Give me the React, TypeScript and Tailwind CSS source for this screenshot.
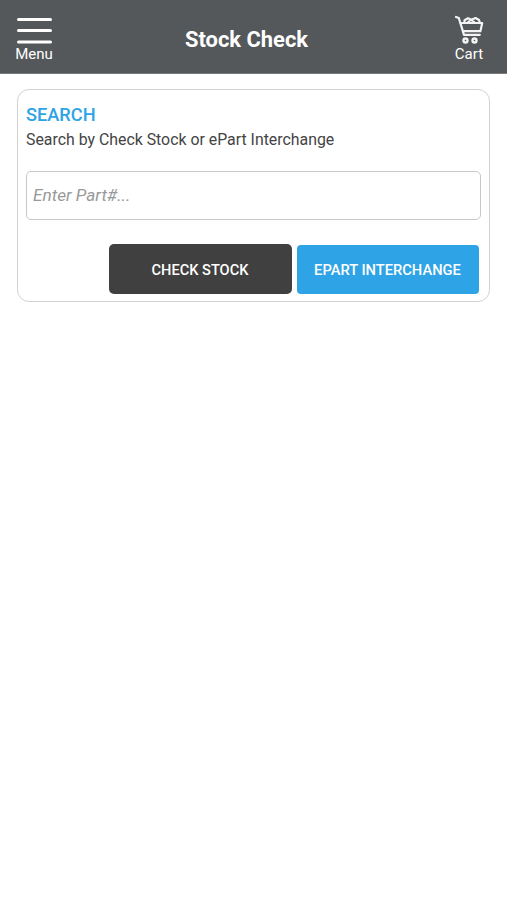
function CartIcon() {
  return (
    <svg width="30" height="30" viewBox="0 0 30 30" fill="none" stroke="#f4f4f4" strokeWidth="2.200" strokeLinecap="round" strokeLinejoin="round">
      <path d="M2 2l2.800 1L10 19.800h15.800" />
      <path d="M6.500 8h21.700l-1.800 8.200H9.200" />
      <path d="M10.500 7.500V5.300l3.500-2 3.500 1.500 4-1.800 3.500 2 .8 2.500" />
      <path d="M14 6.800l3-1.600 3.500 1.800" strokeWidth="1.600" />
      <circle cx="11.500" cy="25.500" r="2" strokeWidth="2.400" />
      <circle cx="20.500" cy="25.500" r="2" strokeWidth="2.400" />
    </svg>
  )
}

function MenuIcon() {
  return (
    <svg width="36" height="30" viewBox="0 0 36 30" stroke="#fff" strokeWidth="3" strokeLinecap="round">
      <path d="M2.500 4.500h32M2.500 15.500h32M2.500 27h32" />
    </svg>
  )
}

export default function App() {
  return (
    <div className="min-h-screen bg-white font-['Roboto',sans-serif] text-[#444]">
      <header className="grid h-[74px] grid-cols-[38px_1fr_38px] items-start border-b border-[#777b7d] bg-[#54585a] pt-[15px] pr-[19px] pl-[15px] text-white">
        <button className="flex flex-col items-center text-[15px] leading-[18px]">
          <MenuIcon />
          Menu
        </button>
        <h1 className="pt-[9px] pr-[10px] text-center text-[21.900px] leading-8 font-bold">Stock Check</h1>
        <button className="flex flex-col items-center text-[15px] leading-[18px]">
          <CartIcon />
          Cart
        </button>
      </header>

      <main className="mx-[17px] mt-[15px] h-[213px] rounded-[12px] border-[1.500px] border-[#d2d2d2] px-2 pt-[13px]">
        <h2 className="text-[18.200px] leading-[23px] font-medium text-[#2ea3e6]">SEARCH</h2>
        <p className="pt-[2px] text-[15.870px] leading-6">Search by Check Stock or ePart Interchange</p>
        <input
          className="mt-[19px] block h-[49px] w-full rounded-[5px] border border-[#c8c8c8] px-[6px] pb-[2px] text-[17.200px] italic placeholder:text-[#999]"
          placeholder="Enter Part#..."
        />
        <div className="mt-6 flex items-center justify-end gap-[5px] pr-[2.500px]">
          <button className="h-[50px] w-[183px] rounded-[5px] bg-[#404040] pt-[3px] text-[14.600px] font-medium text-white">CHECK STOCK</button>
          <button className="h-[49px] w-[182px] rounded-[4px] bg-[#2ea3e6] pt-[2px] text-[14.700px] font-medium text-white">EPART INTERCHANGE</button>
        </div>
      </main>
    </div>
  )
}
